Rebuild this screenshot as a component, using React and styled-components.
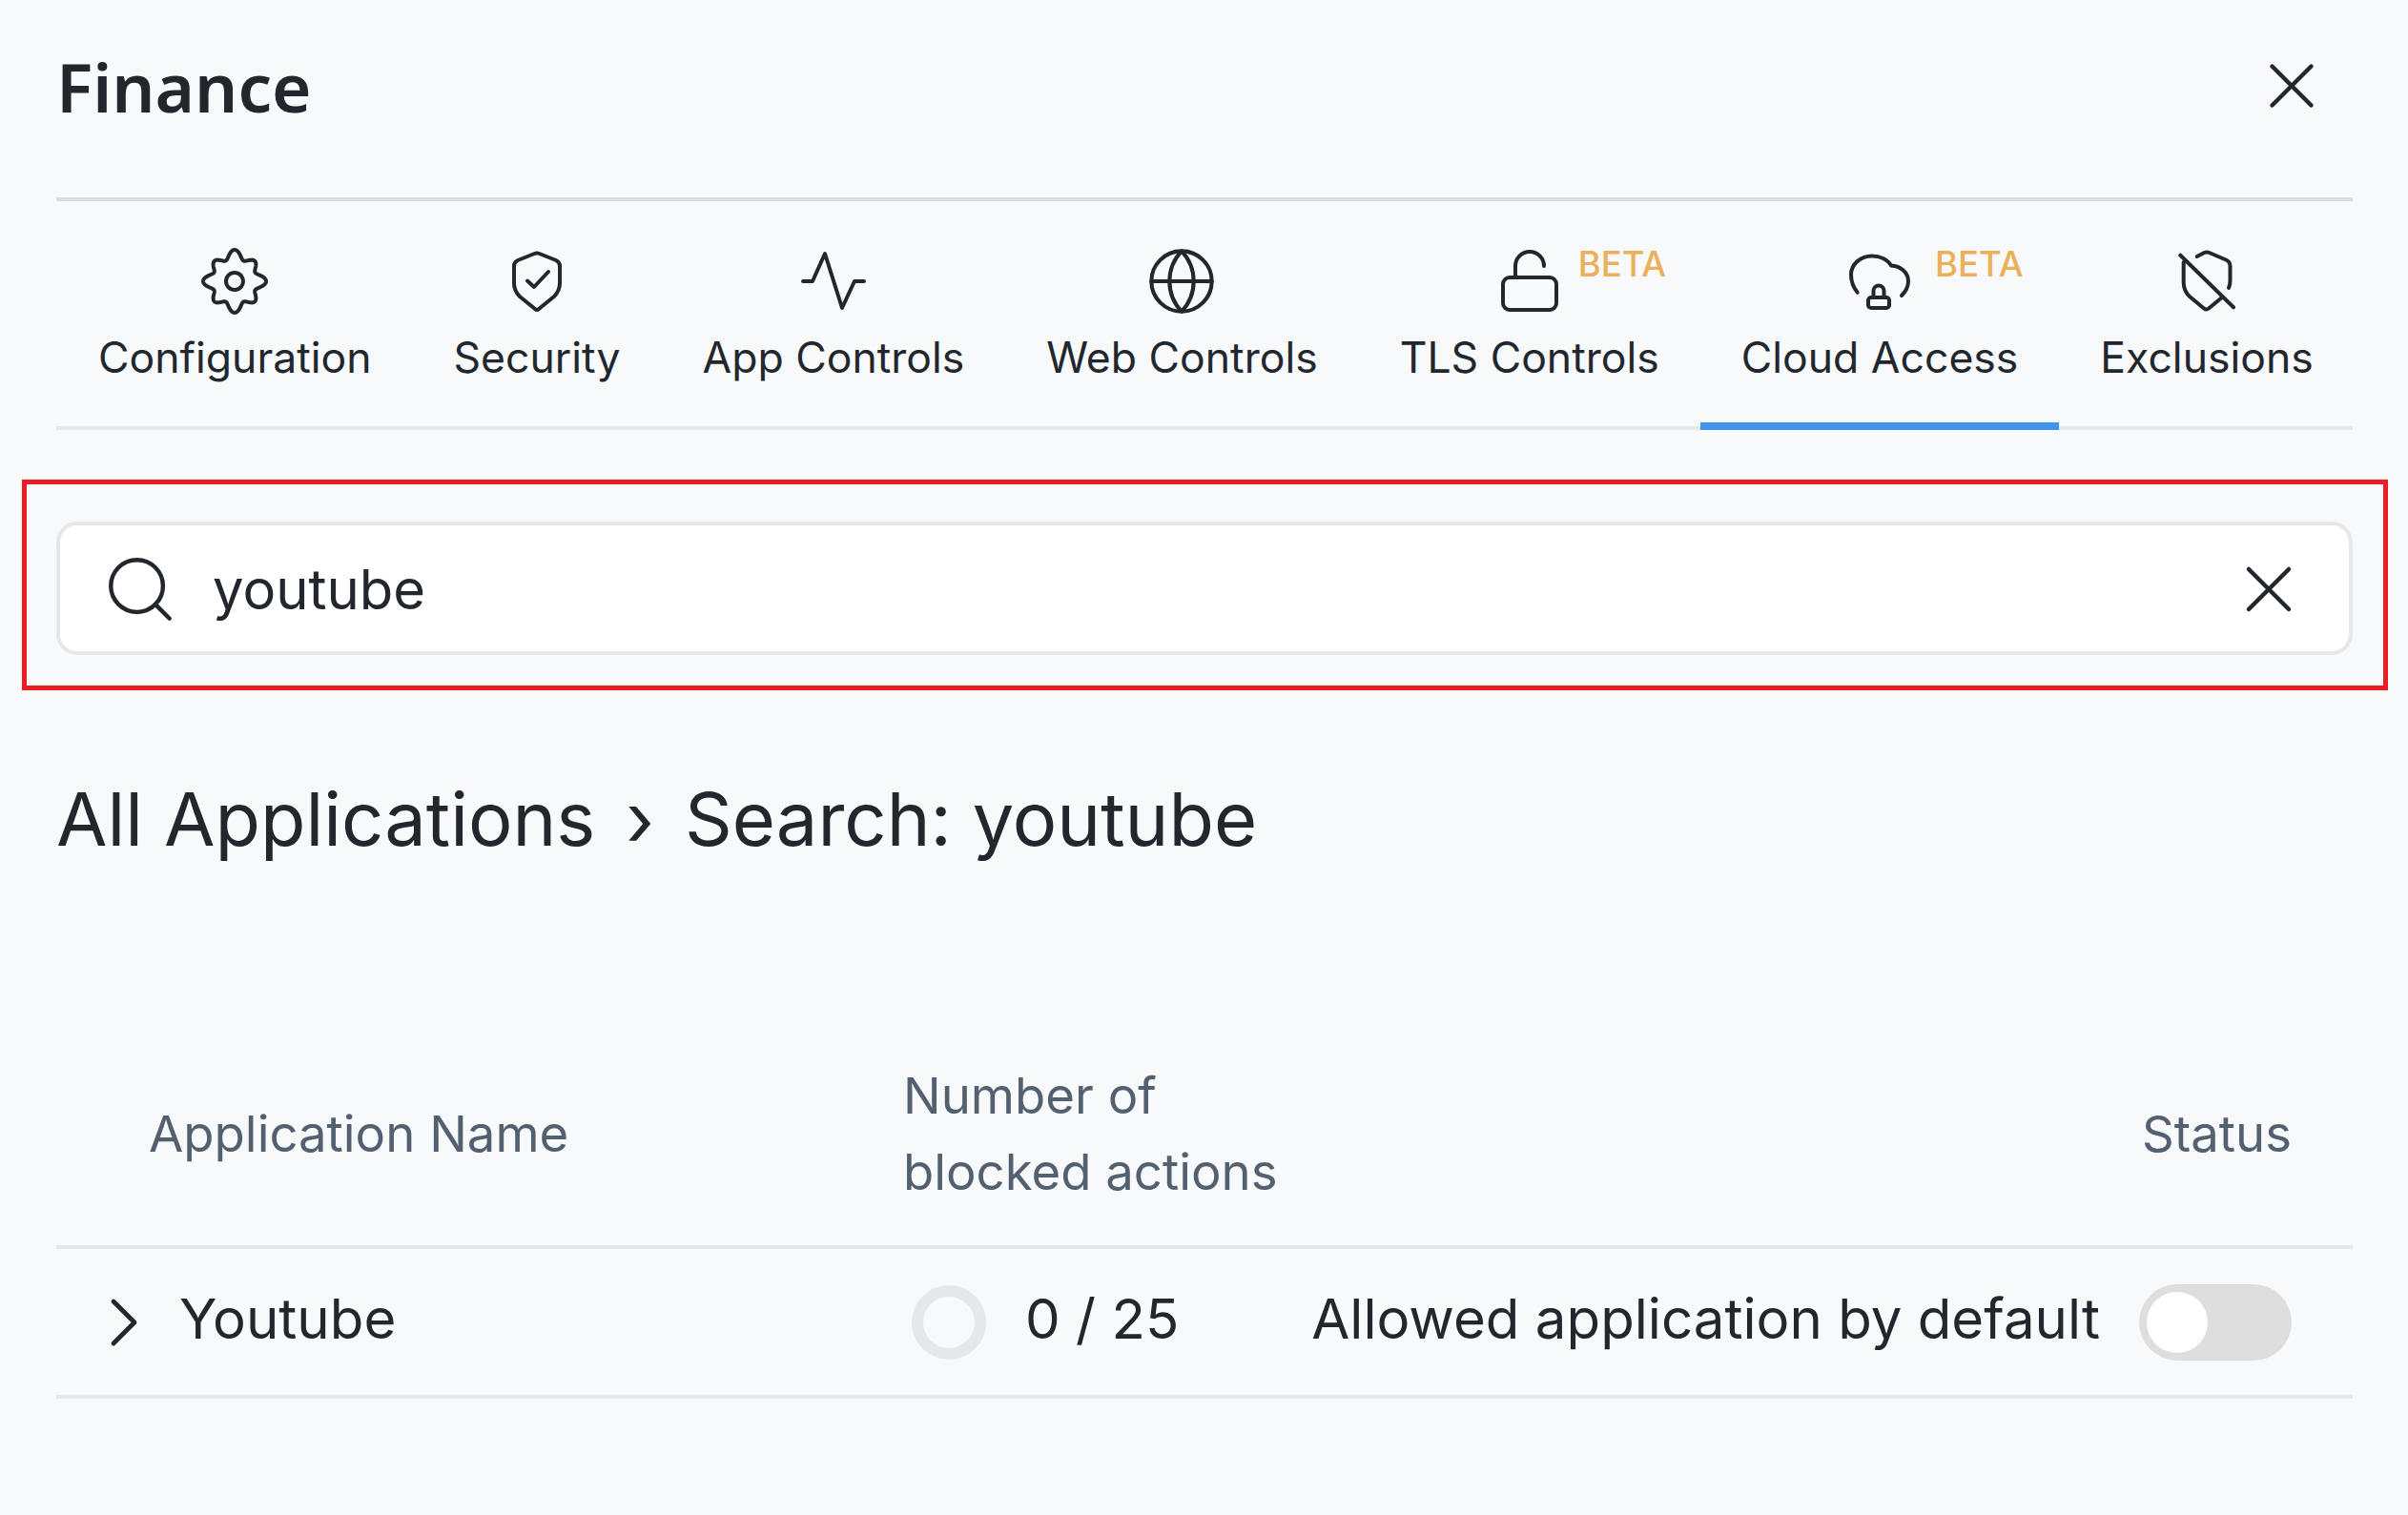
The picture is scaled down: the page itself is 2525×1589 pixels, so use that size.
import React from "react";
import styled, { createGlobalStyle } from "styled-components";
import { Globe, X, Search, ChevronRight } from "lucide-react";

const GlobalStyle = createGlobalStyle`
  html, body {
    margin: 0;
    padding: 0;
    background: #f8f9fb;
  }
  body {
    font-family: Inter, "Noto Sans", sans-serif;
    color: #22272e;
  }
`;

const Page = styled.div`
  width: 2525px;
  height: 1589px;
  box-sizing: border-box;
  padding: 0 58px 0 59px;
  overflow: hidden;
`;

const Header = styled.div`
  height: 207px;
  display: flex;
  align-items: flex-start;
  justify-content: space-between;
  border-bottom: 4px solid #dcdddf;
`;

const Title = styled.h1`
  margin: 49px 0 0;
  font-family: "Noto Sans", sans-serif;
  font-size: 71px;
  line-height: 84px;
  font-weight: 600;
`;

const CloseBtn = styled.div`
  display: flex;
  margin: 49px 23px 0 0;
`;

const Tabs = styled.div`
  display: flex;
  height: 236px;
  padding-left: 1px;
  border-bottom: 4px solid #e6e7e9;
`;

const Tab = styled.div`
  position: relative;
  box-sizing: border-box;
  height: 240px;
  padding: 48px 43px 0;
  display: flex;
  flex-direction: column;
  align-items: center;
  border-bottom: 8px solid ${(p) => (p.$active ? "#3f95ee" : "transparent")};
`;

const TabIcon = styled.div`
  width: 72px;
  height: 72px;
  display: flex;
  align-items: center;
  justify-content: center;

  & svg {
    flex-shrink: 0;
  }
`;

const TabLabel = styled.div`
  margin-top: 16px;
  font-size: 44.52px;
  line-height: 56px;
  white-space: nowrap;
`;

const Beta = styled.span`
  position: absolute;
  top: 44px;
  left: calc(50% + ${(p) => p.$offset}px);
  color: #ebb05c;
  font-size: 36.5px;
  font-weight: 500;
  line-height: 44px;
`;

const SearchFrame = styled.div`
  margin: 52px -37px 0 -36px;
  height: 221px;
  box-sizing: border-box;
  border: 5px solid #ed1c24;
  padding: 39px 32px 0 31px;
`;

const SearchBox = styled.div`
  height: 140px;
  box-sizing: border-box;
  background: #fff;
  border: 4px solid #e6e7e9;
  border-radius: 22px;
  display: flex;
  align-items: center;
  padding: 2px 42px 0 43px;
`;

const SearchText = styled.div`
  flex: 1;
  margin-left: 35px;
  font-size: 58px;
  line-height: 72px;
`;

const Breadcrumb = styled.div`
  margin-top: 85px;
  display: flex;
  align-items: center;
  font-size: 77.6px;
  line-height: 100px;
`;

const CrumbSep = styled.span`
  margin: 0 32px;
`;

const TableHead = styled.div`
  margin-top: 200px;
  height: 197px;
  display: grid;
  grid-template-columns: 888px 1fr auto;
  align-items: start;
  border-bottom: 4px solid #e6e7e9;
  color: #526070;
  font-size: 52.7px;
  line-height: 80px;
  padding-right: 64px;
`;

const HeadName = styled.div`
  padding: 40px 0 0 97px;
`;

const HeadCount = styled.div``;

const HeadStatus = styled.div`
  padding-top: 40px;
`;

const Row = styled.div`
  height: 153px;
  display: flex;
  align-items: center;
  border-bottom: 4px solid #e6e7e9;
  font-size: 58.2px;
  padding-right: 64px;
`;

const Chevron = styled.div`
  display: flex;
  margin-left: 27px;
  width: 102px;
`;

const RowText = styled.div`
  margin-bottom: 8px;
`;

const AppName = styled(RowText)`
  width: 768px;
`;

const Progress = styled.div`
  box-sizing: border-box;
  width: 78px;
  height: 78px;
  border: 12px solid #e6e7e9;
  border-radius: 50%;
`;

const Count = styled(RowText)`
  margin-left: 41px;
  flex: 1;
`;

const Allowed = styled(RowText)`
  margin-right: 41px;
`;

const Toggle = styled.div`
  box-sizing: border-box;
  width: 160px;
  height: 80px;
  padding: 8px;
  border-radius: 40px;
  background: #dedede;
`;

const Knob = styled.div`
  width: 64px;
  height: 64px;
  border-radius: 50%;
  background: #fff;
`;

const Svg = styled.svg.attrs({
  width: 72,
  height: 72,
  viewBox: "0 0 72 72",
  fill: "none",
  stroke: "currentColor",
  strokeWidth: 4,
  strokeLinecap: "round",
  strokeLinejoin: "round",
})``;

// wavy 8 tooth outline, slightly squarer on the diagonals like the original
const gearPath = () => {
  const pts = [];
  for (let i = 0; i < 240; i++) {
    const t = (i / 240) * Math.PI * 2;
    const r = 27.5 + 4 * Math.cos(8 * t) + 1.5 * Math.cos(4 * t);
    pts.push(`${(36 + r * Math.cos(t)).toFixed(2)} ${(36 + r * Math.sin(t)).toFixed(2)}`);
  }
  return `M${pts.join("L")}Z`;
};

const GearIcon = () => (
  <Svg>
    <path d={gearPath()} />
    <circle cx="36" cy="36" r="9" />
  </Svg>
);

const ShieldCheckIcon = () => (
  <Svg>
    <path d="M33.5 7 Q36 6 38.5 7 L56 14 Q60 16 60 20 V38 Q60 46 54 52 L38 65 Q36 67 34 65 L18 52 Q12 46 12 38 V20 Q12 16 16 14 Z" />
    <path d="M26 35.5 L33 42 L48 26" />
  </Svg>
);

const ActivityIcon = () => (
  <Svg>
    <path d="M4 36 H14 L27 7 L45 64 L58 36 H68" />
  </Svg>
);

const LockOpenIcon = () => (
  <Svg>
    <rect x="8" y="32" width="56" height="34" rx="7" />
    <path d="M21 32 V20 A15 15 0 0 1 51 20" />
  </Svg>
);

const CloudLockIcon = () => (
  <Svg>
    <path d="M12.7 47.7 C8 42 6 35 6 29 C6 18 16 9.5 28 9.5 C36 9.5 44 13 48 19.5 C58 20 66 27 66 36 C66 42 63 47 59 51" />
    <rect x="24" y="53" width="22" height="11" rx="3" />
    <path d="M29.5 53 V46 A5.5 5.5 0 0 1 40.5 46 V53" />
  </Svg>
);

const ShieldOffIcon = () => (
  <Svg>
    <path d="M25.7 10 L33.5 6 Q36 5 38.5 6 L56 13.5 Q60.5 15.5 60.5 20 V36 Q60.5 39 59 43" />
    <path d="M11.7 16 V37 Q11.7 46 18 52 L33 64.5 Q35.5 66.5 38 64.5 L51 53.7" />
    <path d="M8.3 8.7 L64 63.3" />
  </Svg>
);

const tabs = [
  { label: "Configuration", icon: <GearIcon /> },
  { label: "Security", icon: <ShieldCheckIcon /> },
  { label: "App Controls", icon: <ActivityIcon /> },
  { label: "Web Controls", icon: <Globe size={76} strokeWidth={1.3} /> },
  { label: "TLS Controls", icon: <LockOpenIcon />, beta: 51 },
  { label: "Cloud Access", icon: <CloudLockIcon />, beta: 58, active: true },
  { label: "Exclusions", icon: <ShieldOffIcon /> },
];

export default function App() {
  return (
    <Page>
      <GlobalStyle />
      <Header>
        <Title>Finance</Title>
        <CloseBtn>
          <X size={82} strokeWidth={1.3} />
        </CloseBtn>
      </Header>
      <Tabs>
        {tabs.map((tab) => (
          <Tab key={tab.label} $active={tab.active}>
            <TabIcon>{tab.icon}</TabIcon>
            <TabLabel>{tab.label}</TabLabel>
            {tab.beta && <Beta $offset={tab.beta}>BETA</Beta>}
          </Tab>
        ))}
      </Tabs>
      <SearchFrame>
        <SearchBox>
          <Search size={82} strokeWidth={1.3} />
          <SearchText>youtube</SearchText>
          <X size={84} strokeWidth={1.3} />
        </SearchBox>
      </SearchFrame>
      <Breadcrumb>
        All Applications
        <CrumbSep>›</CrumbSep>
        Search: youtube
      </Breadcrumb>
      <TableHead>
        <HeadName>Application Name</HeadName>
        <HeadCount>
          Number of
          <br />
          blocked actions
        </HeadCount>
        <HeadStatus>Status</HeadStatus>
      </TableHead>
      <Row>
        <Chevron>
          <ChevronRight size={88} strokeWidth={1.3} />
        </Chevron>
        <AppName>Youtube</AppName>
        <Progress />
        <Count>0 / 25</Count>
        <Allowed>Allowed application by default</Allowed>
        <Toggle>
          <Knob />
        </Toggle>
      </Row>
    </Page>
  );
}
